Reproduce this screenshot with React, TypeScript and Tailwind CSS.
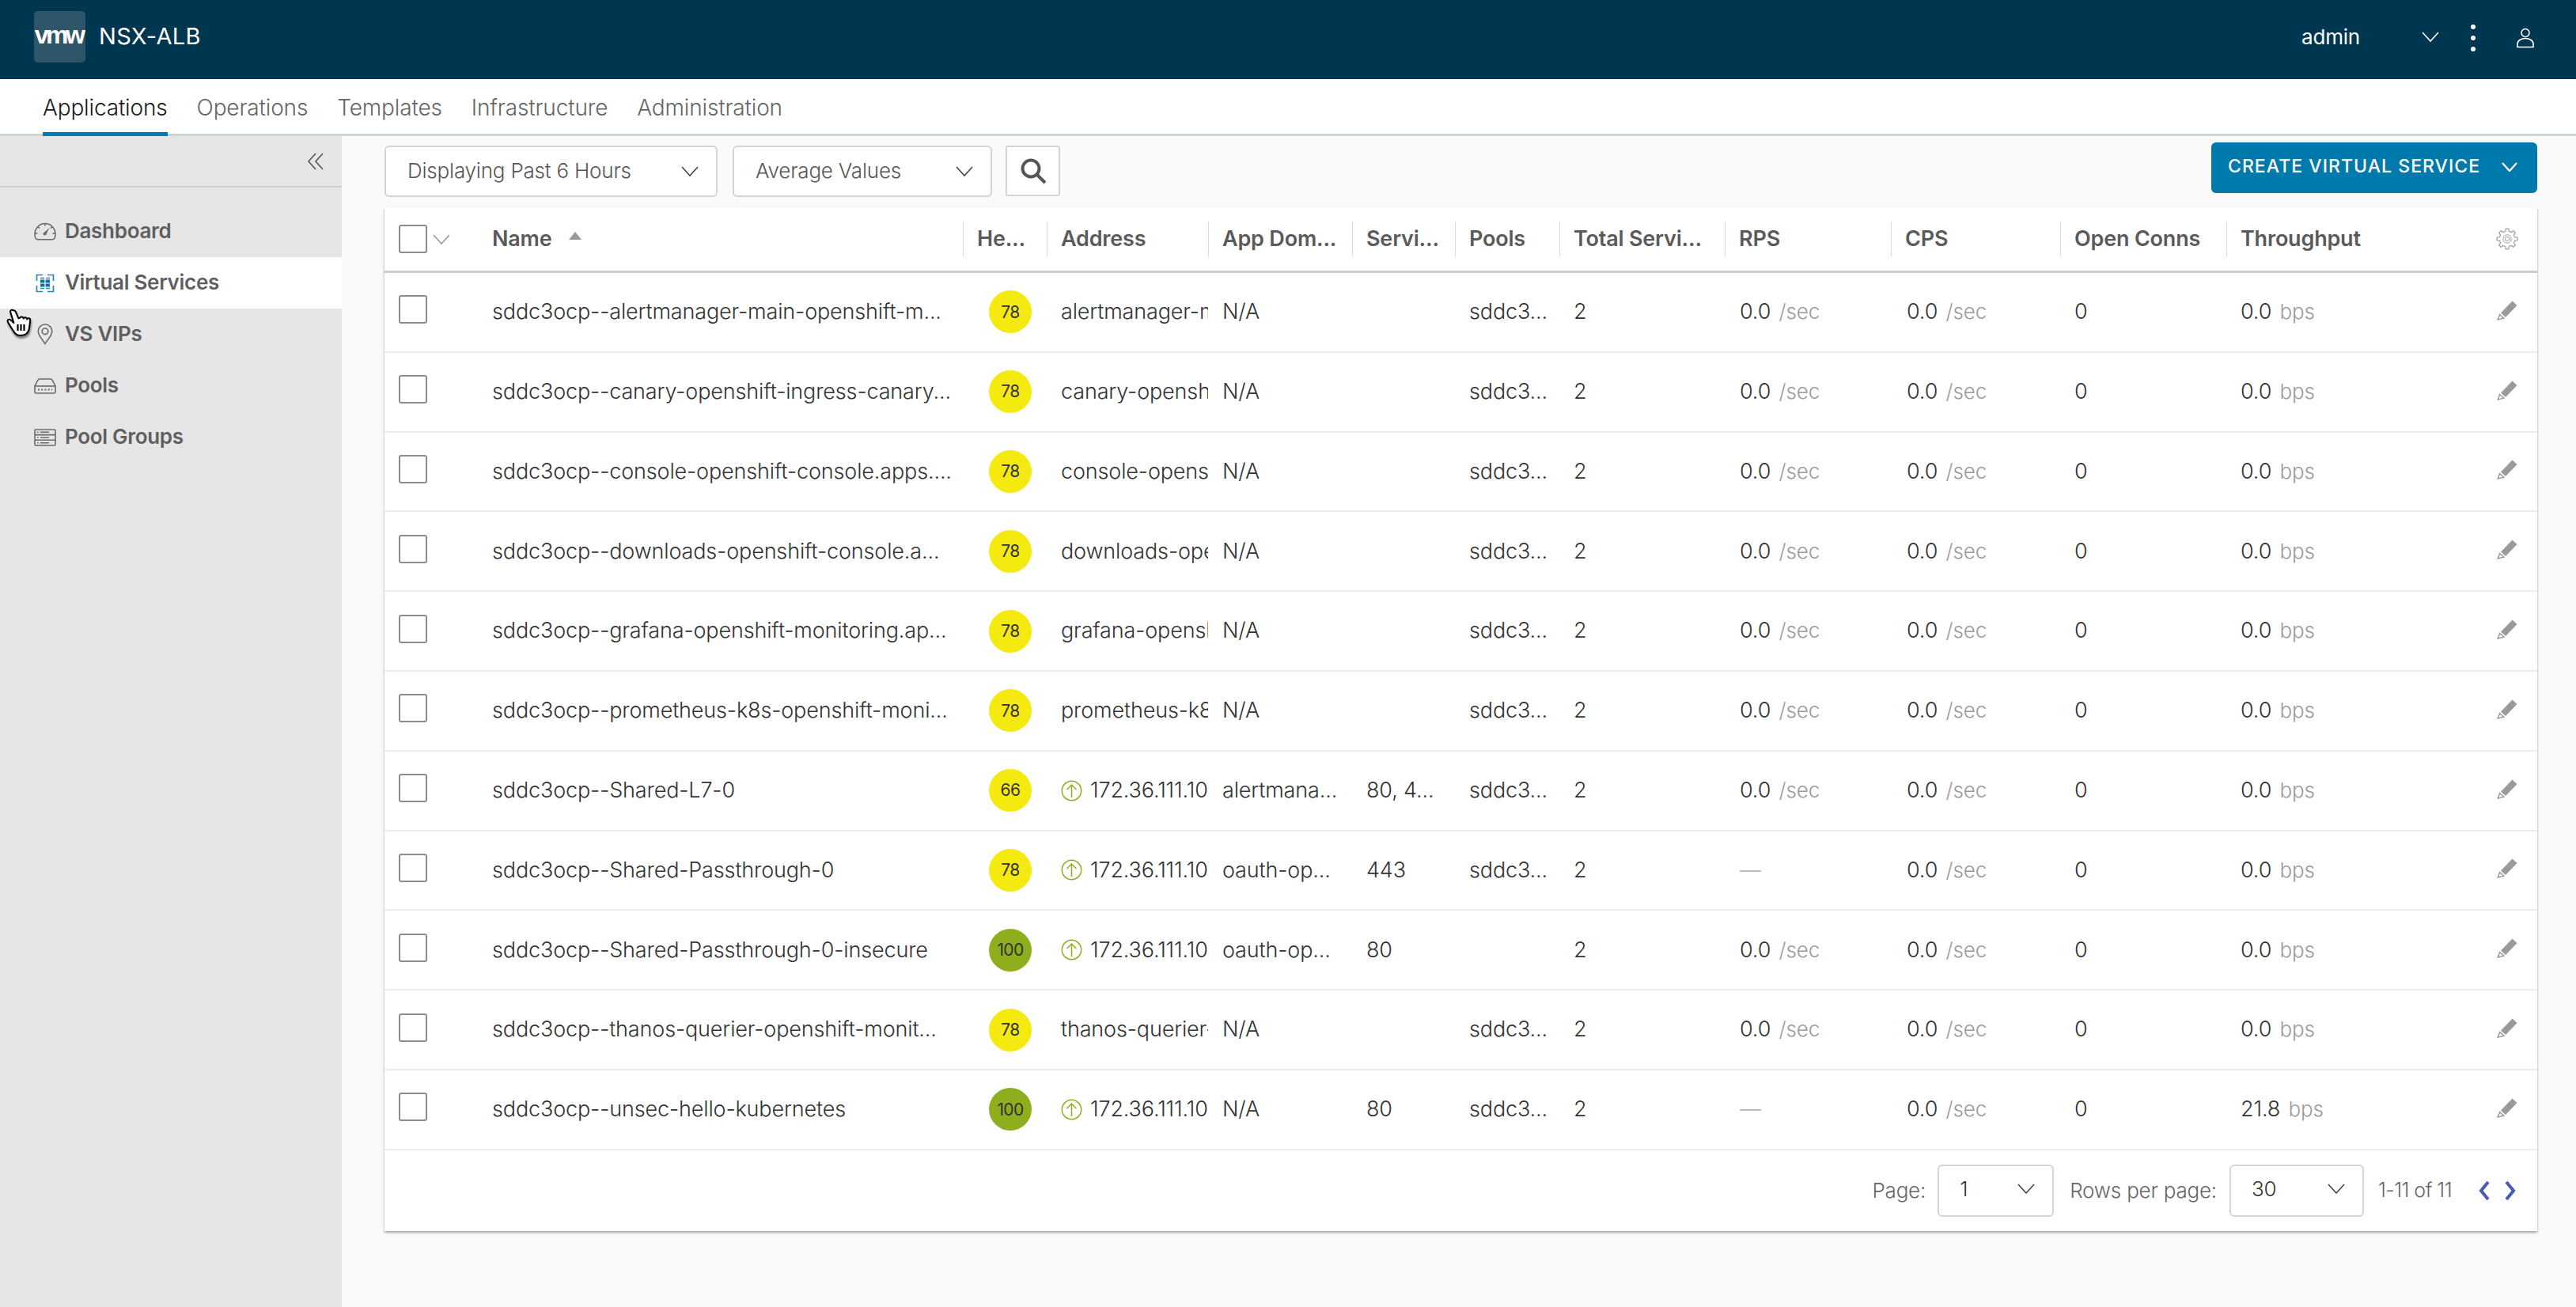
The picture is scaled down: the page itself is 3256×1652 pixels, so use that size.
import React from "react";

const Chev = ({ className = "", w = 22, h = 13, sw = 1.6 }: { className?: string; w?: number; h?: number; sw?: number }) => (
  <svg width={w} height={h} viewBox="0 0 22 13" fill="none" className={className} preserveAspectRatio="none">
    <path d="M1 1 L11 12 L21 1" stroke="currentColor" strokeWidth={sw} />
  </svg>
);

const Pencil = () => (
  <svg width="26" height="25" viewBox="0 0 26 25" className="text-[#9a9a9a]">
    <path d="M19.5 .5 L25.5 6 L11 21 L5 15.5 Z" fill="currentColor" />
    <path d="M3.6 17.5 L8.8 22.2 L1.2 24 Z" fill="none" stroke="currentColor" strokeWidth="1.5" />
  </svg>
);

const gearPath = (() => {
  const pts: string[] = [];
  const n = 8;
  const cx = 14, cy = 14;
  for (let i = 0; i < n; i++) {
    const a = (i * 2 * Math.PI) / n - Math.PI / 2;
    const d = Math.PI / n;
    const p = (r: number, t: number) => `${(cx + r * Math.cos(t)).toFixed(2)} ${(cy + r * Math.sin(t)).toFixed(2)}`;
    pts.push(`${i === 0 ? "M" : "L"}${p(9.8, a - d * 0.62)}`);
    pts.push(`L${p(13, a - d * 0.36)}`);
    pts.push(`L${p(13, a + d * 0.36)}`);
    pts.push(`L${p(9.8, a + d * 0.62)}`);
  }
  return pts.join(" ") + " Z";
})();

const Gear = () => (
  <svg width="28" height="28" viewBox="0 0 28 28" fill="none" stroke="#a3a3a3" strokeWidth="1.3" strokeLinejoin="round">
    <path d={gearPath} />
    <circle cx="14" cy="14" r="5.2" strokeWidth="1" />
    <circle cx="14" cy="14" r="2.8" strokeWidth="1" />
  </svg>
);

const UpCircle = () => (
  <svg width="27" height="27" viewBox="0 0 27 27" fill="none" stroke="#8fae1e" strokeWidth="1.5" className="shrink-0">
    <circle cx="13.5" cy="13.5" r="12.2" />
    <path d="M13.5 22V6 M7.5 12 L13.5 6 L19.5 12" />
  </svg>
);

const IconDash = () => (
  <svg width="28" height="23" viewBox="0 0 28 23" fill="none" stroke="#6a6a6a" strokeWidth="1.6">
    <path d="M5 21.8 C2.5 21.8 1 19.5 1 15 A13 13.5 0 0 1 27 15 C27 19.5 25.5 21.8 23 21.8 Z" />
    <path d="M12.3 13.2 L19.5 7 L15 15.8 Z" fill="#6a6a6a" stroke="none" />
    <circle cx="13.6" cy="14.6" r="2" fill="#6a6a6a" stroke="none" />
    <path d="M14 1.5v3 M1.5 14h3 M26.5 14h-3 M5 5.5l2 2 M23 5.5l-2 2" />
  </svg>
);
const IconVS = () => (
  <svg width="24" height="24" viewBox="0 0 24 24" fill="none" stroke="#2c87b5" strokeWidth="1.7">
    <path d="M9 1.5H1.5V9 M15 1.5h7.5V9 M9 22.5H1.5V15 M15 22.5h7.5V15" />
    <path d="M6 5.5h5 M13 5.5h5 M6 18.5h5 M13 18.5h5" strokeWidth="1.6" />
    <path d="M6 7.5h5.4v4H6z M12.6 7.5H18v4h-5.4z M6 12.6h5.4v4H6z M12.6 12.6H18v4h-5.4z" fill="#0a6fa8" stroke="none" />
  </svg>
);
const IconPin = () => (
  <svg width="20" height="27" viewBox="0 0 20 27" fill="none" stroke="#6a6a6a" strokeWidth="1.6">
    <path d="M10 25.5 C8 21.5 1.2 15.5 1.2 9.8 A8.8 8.8 0 0 1 18.8 9.8 C18.8 15.5 12 21.5 10 25.5 Z" />
    <circle cx="10" cy="9.8" r="3.8" />
  </svg>
);
const IconPool = () => (
  <svg width="28" height="20" viewBox="0 0 28 20" fill="none" stroke="#6a6a6a" strokeWidth="1.6">
    <path d="M6.5 1h15l2 2 3.5 7v7.5a1.5 1.5 0 0 1-1.5 1.5h-23A1.5 1.5 0 0 1 1 17.5V10l3.5-7z" />
    <path d="M1.5 10h25" />
    <path d="M5 14.5h18" strokeWidth="2" strokeDasharray="2 2.2" />
  </svg>
);
const IconGroups = () => (
  <svg width="28" height="22" viewBox="0 0 28 22" fill="none" stroke="#6a6a6a" strokeWidth="1.6">
    <rect x="1" y="1" width="26" height="20" rx="1" />
    <path d="M1 7.6h26 M1 14.3h26" />
    <path d="M4 4.3h1.6 M8 4.3h11 M4 11h1.6 M8 11h11 M4 17.7h1.6 M8 17.7h11" strokeWidth="1.5" />
  </svg>
);

const HandCursor = () => (
  <svg width="32" height="36" viewBox="0 0 32 36" fill="white" stroke="black" strokeWidth="2" strokeLinejoin="round">
    <path d="M8 2 C6.2 1.2 4.6 2.6 5.2 4.6 L9.4 18 L6.2 15 C3.4 12.4 .4 14.6 2 17.2 L9 28.5 C11 32.2 14.2 34 18 34 C24.4 34 28.4 30.4 29 24.4 L30.2 14.6 C30.4 12 27 11.4 26.2 13.6 C26.2 11 22.6 10.2 21.8 12.6 C21.4 10 17.8 9.6 17 12 L15.4 12.4 L11.6 3.6 C10.9 2.5 9.6 2.3 8 2 Z" />
    <path d="M14.5 20v8 M18.5 20v8 M22.5 20v8" fill="none" strokeWidth="2.2" />
  </svg>
);

const cols = "grid grid-cols-[118px_613px_106px_204px_182px_130px_132px_209px_210px_214px_210px_293px_100px]";

const Head = ({ children, bar = true }: { children?: React.ReactNode; bar?: boolean }) => (
  <div className="relative flex items-center pl-[18px] min-w-0 whitespace-nowrap overflow-hidden font-semibold text-[#5a5a5a] text-[27px] tracking-[-0.2px]">
    {bar && <span className="absolute left-0 top-[18px] h-[45px] w-px bg-[#dcdcdc]" />}
    {children}
  </div>
);

const Cell = ({ children, className = "" }: { children?: React.ReactNode; className?: string }) => (
  <div className={`flex items-center pl-[18px] min-w-0 whitespace-nowrap overflow-hidden ${className}`}>{children}</div>
);

const Val = ({ v, u }: { v: string; u: string }) => (
  <span>
    <span className="text-[#333]">{v}</span> <span className="ml-[3px] text-[#9b9b9b] text-[26px]">{u}</span>
  </span>
);

type Row = { name: string; h: number; addr: string; up?: boolean; dom: string; svc: string; pool: string; rps: boolean; tp: string };
const rows: Row[] = [
  { name: "sddc3ocp--alertmanager-main-openshift-m...", h: 78, addr: "alertmanager-main", dom: "N/A", svc: "", pool: "sddc3...", rps: true, tp: "0.0" },
  { name: "sddc3ocp--canary-openshift-ingress-canary...", h: 78, addr: "canary-openshift-ingress", dom: "N/A", svc: "", pool: "sddc3...", rps: true, tp: "0.0" },
  { name: "sddc3ocp--console-openshift-console.apps....", h: 78, addr: "console-openshift-console", dom: "N/A", svc: "", pool: "sddc3...", rps: true, tp: "0.0" },
  { name: "sddc3ocp--downloads-openshift-console.a...", h: 78, addr: "downloads-openshift", dom: "N/A", svc: "", pool: "sddc3...", rps: true, tp: "0.0" },
  { name: "sddc3ocp--grafana-openshift-monitoring.ap...", h: 78, addr: "grafana-openshift", dom: "N/A", svc: "", pool: "sddc3...", rps: true, tp: "0.0" },
  { name: "sddc3ocp--prometheus-k8s-openshift-moni...", h: 78, addr: "prometheus-k8s-openshift", dom: "N/A", svc: "", pool: "sddc3...", rps: true, tp: "0.0" },
  { name: "sddc3ocp--Shared-L7-0", h: 66, addr: "172.36.111.10", up: true, dom: "alertmana...", svc: "80, 4...", pool: "sddc3...", rps: true, tp: "0.0" },
  { name: "sddc3ocp--Shared-Passthrough-0", h: 78, addr: "172.36.111.10", up: true, dom: "oauth-op...", svc: "443", pool: "sddc3...", rps: false, tp: "0.0" },
  { name: "sddc3ocp--Shared-Passthrough-0-insecure", h: 100, addr: "172.36.111.10", up: true, dom: "oauth-op...", svc: "80", pool: "", rps: true, tp: "0.0" },
  { name: "sddc3ocp--thanos-querier-openshift-monit...", h: 78, addr: "thanos-querier-openshift", dom: "N/A", svc: "", pool: "sddc3...", rps: true, tp: "0.0" },
  { name: "sddc3ocp--unsec-hello-kubernetes", h: 100, addr: "172.36.111.10", up: true, dom: "N/A", svc: "80", pool: "sddc3...", rps: false, tp: "21.8" },
];

const Box = () => <span className="block w-[36px] h-[36px] rounded-[3px] border-2 border-[#8c8c8c] bg-white" />;

const Dropdown = ({ label, width }: { label: string; width: string }) => (
  <div className={`${width} h-[65px] flex items-center justify-between pl-[27px] pr-[22px] bg-white border-2 border-[#d4d4d4] rounded-[6px] text-[26px] tracking-[-0.2px] text-[#565656] font-light`}>
    <span className="pb-[2px]">{label}</span>
    <Chev className="text-[#444]" />
  </div>
);

const Select = ({ v, width }: { v: string; width: string }) => (
  <div className={`${width} h-[66px] flex items-center justify-between pl-[26px] pr-[22px] border-2 border-[#d4d4d4] rounded-[6px] text-[#333] bg-white pb-[4px]`}>
    <span>{v}</span>
    <Chev className="text-[#444]" />
  </div>
);

const side = [
  { t: "Dashboard", i: <IconDash />, pl: "pl-[43px]" },
  { t: "Virtual Services", i: <IconVS />, a: true, pl: "pl-[45px]" },
  { t: "VS VIPs", i: <IconPin />, pl: "pl-[47px]" },
  { t: "Pools", i: <IconPool />, pl: "pl-[43px]" },
  { t: "Pool Groups", i: <IconGroups />, pl: "pl-[43px]" },
];

export default function App() {
  return (
    <div className="relative w-[3256px] h-[1652px] overflow-hidden flex flex-col bg-[#fafafa] font-['Inter',sans-serif] font-light text-[#333] text-[27px] tracking-[-0.15px]">
      <header className="h-[100px] shrink-0 bg-[#00364f] text-white flex items-center pl-[43px] pb-[8px]">
        <div className="w-[65px] h-[65px] rounded-[5px] bg-[#2f5668] flex items-center justify-center font-bold text-[32px] tracking-[-3.6px] font-['Liberation_Sans',sans-serif] pb-[4px] pr-[3px]">vmw</div>
        <span className="ml-[17px] text-[29px] font-normal tracking-[0.3px]">NSX-ALB</span>
        <span className="ml-auto text-[26px] font-normal tracking-[-0.2px]">admin</span>
        <Chev className="ml-[78px] text-white" />
        <div className="ml-[40px] mt-[3px] flex flex-col gap-[8px] items-center">
          <span className="block w-[6px] h-[6px] rounded-full bg-white" />
          <span className="block w-[6px] h-[6px] rounded-full bg-white" />
          <span className="block w-[6px] h-[6px] rounded-full bg-white" />
        </div>
        <svg width="22" height="26" viewBox="0 0 22 26" fill="none" stroke="white" strokeWidth="1.6" className="ml-[52px] mr-[53px] mt-[3px]">
          <circle cx="11" cy="6.5" r="5" />
          <path d="M1 24.5v-4c0-4 4.5-7 10-7s10 3 10 7v4z" />
        </svg>
      </header>

      <nav className="h-[72px] shrink-0 bg-white border-b-[3px] border-[#c6d5d5] flex items-stretch pl-[54px] gap-[37px] text-[28px] font-light text-[#666] tracking-[-0.15px]">
        <div className="relative flex items-center pt-[3px] text-[#1a1a1a]">
          Applications
          <span className="absolute left-0 right-0 bottom-[-3px] h-[5px] bg-[#0079b8]" />
        </div>
        <div className="flex items-center pt-[3px]">Operations</div>
        <div className="flex items-center pt-[3px]">Templates</div>
        <div className="flex items-center pt-[3px]">Infrastructure</div>
        <div className="flex items-center pt-[3px]">Administration</div>
      </nav>

      <div className="flex-1 flex min-h-0">
        <aside className="w-[432px] shrink-0 bg-[#e6e6e6]">
          <div className="h-[65px] border-b-2 border-[#d0d0d0] flex items-center justify-end pr-[22px] text-[#555]">
            <svg width="22" height="22" viewBox="0 0 22 22" fill="none" stroke="currentColor" strokeWidth="1.6">
              <path d="M11 1 L2 11 L11 21 M20 1 L11 11 L20 21" />
            </svg>
          </div>
          <div className="pt-[23px]">
            {side.map((s) => (
              <div key={s.t} className={`h-[65px] flex items-center font-semibold text-[#5f5f5f] text-[26px] tracking-[-0.3px] ${s.a ? "bg-white" : ""}`}>
                <span className={`w-[82px] ${s.pl} flex justify-start items-center shrink-0`}>{s.i}</span>
                <span className="pb-[3px]">{s.t}</span>
              </div>
            ))}
          </div>
        </aside>

        <main className="flex-1 min-w-0 pl-[54px] pr-[49px]">
          <div className="h-[90px] flex justify-between pt-[8px]">
            <div className="flex items-start gap-[19px] pt-[4px]">
              <Dropdown label="Displaying Past 6 Hours" width="w-[421px]" />
              <Dropdown label="Average Values" width="w-[328px]" />
              <div className="w-[69px] h-[64px] -ml-[2px] bg-white border-2 border-[#d4d4d4] rounded-[3px] flex items-center justify-center">
                <svg width="34" height="34" viewBox="0 0 34 34" fill="none" stroke="#565656" strokeWidth="4">
                  <circle cx="14" cy="14" r="10.5" />
                  <path d="M22 22 L32 32" />
                </svg>
              </div>
            </div>
            <div className="w-[412px] h-[64px] bg-[#0079ad] rounded-[6px] text-white flex items-center pl-[21px] pb-[3px] font-medium text-[23px] tracking-[1.05px]">
              CREATE VIRTUAL SERVICE
              <Chev className="ml-[27px] text-white" w={20} h={12} sw={2.4} />
            </div>
          </div>

          <div className="bg-white shadow-[0_2px_3px_rgba(0,0,0,0.35)]">
            <div className={`${cols} h-[83px] border-b-[3px] border-[#cccccc]`}>
              <div className="flex items-center pl-[18px] gap-[7px]">
                <Box />
                <Chev className="text-[#9a9a9a]" />
              </div>
              <Head bar={false}>
                Name
                <svg width="16" height="10" viewBox="0 0 16 10" className="ml-[22px] mb-[9px]"><path d="M8 0 L16 10 H0 Z" fill="#9a9a9a" /></svg>
              </Head>
              <Head>He...</Head>
              <Head>Address</Head>
              <Head>App Dom...</Head>
              <Head>Servi...</Head>
              <Head>Pools</Head>
              <Head>Total Servi...</Head>
              <Head>RPS</Head>
              <Head>CPS</Head>
              <Head>Open Conns</Head>
              <Head>Throughput</Head>
              <div className="flex items-center pl-[48px]"><Gear /></div>
            </div>

            {rows.map((r, i) => (
              <div key={i} className={`${cols} h-[100.8px] border-b-2 border-[#ececec]`}>
                <div className="flex items-center pl-[18px] pb-[6px]"><Box /></div>
                <Cell>{r.name}</Cell>
                <Cell className="pl-[33px]">
                  <span className={`w-[54px] h-[54px] shrink-0 rounded-full flex items-center justify-center font-normal text-[21px] tracking-[-0.6px] text-[#333] ${r.h === 100 ? "bg-[#8fae1e]" : "bg-[#f5ea10]"}`}>{r.h}</span>
                </Cell>
                <Cell>
                  {r.up && <span className="mr-[10px] flex"><UpCircle /></span>}
                  {r.addr}
                </Cell>
                <Cell>{r.dom}</Cell>
                <Cell>{r.svc}</Cell>
                <Cell>{r.pool}</Cell>
                <Cell>2</Cell>
                <Cell className="pl-[19px]">{r.rps ? <Val v="0.0" u="/sec" /> : <span className="text-[#b5b5b5]">—</span>}</Cell>
                <Cell className="pl-[20px]"><Val v="0.0" u="/sec" /></Cell>
                <Cell>0</Cell>
                <Cell><Val v={r.tp} u="bps" /></Cell>
                <div className="flex items-center pl-[49px] pb-[4px]"><Pencil /></div>
              </div>
            ))}

            <div className="h-[102px] flex items-center justify-end pr-[26px] text-[#666] text-[26px] tracking-[-0.2px]">
              <span>Page:</span>
              <span className="ml-[15px]"><Select v="1" width="w-[147px]" /></span>
              <span className="ml-[20px]">Rows per page:</span>
              <span className="ml-[16px]"><Select v="30" width="w-[170px]" /></span>
              <span className="ml-[18px] text-[25px] tracking-[-0.5px]">1-11 of 11</span>
              <svg width="16" height="26" viewBox="0 0 16 26" fill="none" stroke="#4a57bd" strokeWidth="4" className="ml-[33px]"><path d="M13 2 L4 13 L13 24" /></svg>
              <svg width="16" height="26" viewBox="0 0 16 26" fill="none" stroke="#4a57bd" strokeWidth="4" className="ml-[17px]"><path d="M3 2 L12 13 L3 24" /></svg>
            </div>
          </div>
        </main>
      </div>

      <div className="absolute left-[8px] top-[390px] drop-shadow-[1px_3px_1px_rgba(0,0,0,0.45)]">
        <HandCursor />
      </div>
    </div>
  );
}
